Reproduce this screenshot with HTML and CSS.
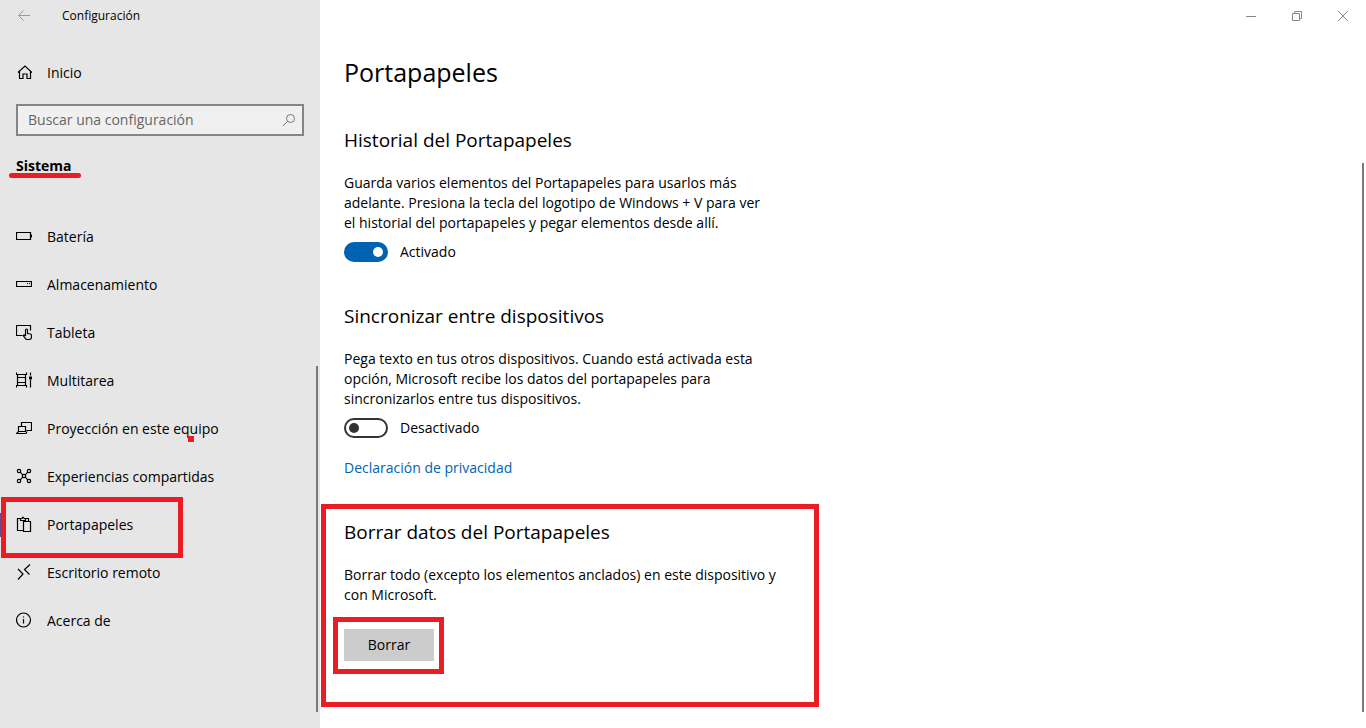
FILE: index.html
```html
<!DOCTYPE html>
<html lang="es">
<head>
  <meta charset="UTF-8" />
  <meta name="viewport" content="width=device-width, initial-scale=1.0"/>
  <title>Configuración</title>
  <link rel="stylesheet" href="styles.css">
</head>
<body>

<aside class="sidebar">
  <header class="app-bar">
    <button class="back-btn" aria-label="Atrás">
      <svg width="16" height="16" viewBox="0 0 16 16"><path d="M14 7.500H2.500M7.500 2.500l-5 5 5 5"/></svg>
    </button>
    <span class="app-name">Configuración</span>
  </header>

  <a class="nav-item" href="#inicio">
    <svg class="icon" viewBox="0 0 16 16"><path d="M2 8.500 9 2l7 6.500M3.500 7.500v7H7v-4.500h4v4.500h3.500v-7"/></svg>
    <span>Inicio</span>
  </a>

  <form class="search">
    <input type="text" placeholder="Buscar una configuración" aria-label="Buscar una configuración">
    <button type="button" aria-label="Buscar">
      <svg width="14" height="14" viewBox="0 0 14 14"><circle cx="8.500" cy="5.500" r="4"/><path d="M5.500 8.500 1 13"/></svg>
    </button>
  </form>

  <h2 class="category"><span>Sistema</span></h2>

  <nav>
    <a class="nav-item" href="#bateria">
      <svg class="icon" viewBox="0 0 16 16"><path d="M.5 4.500h14v7H.5zM15.500 6.500v3"/></svg>
      <span>Batería</span>
    </a>
    <a class="nav-item" href="#almacenamiento">
      <svg class="icon" viewBox="0 0 16 16"><path d="M.5 5.500h15v5H.5zM11 7.500h1M13 7.500h1"/></svg>
      <span>Almacenamiento</span>
    </a>
    <a class="nav-item" href="#tableta">
      <svg class="icon" viewBox="0 0 16 16"><path d="M6.500 11.500h-6v-10h14v5M9.500 12V6q0-1 1-1t1 1v3.500l3 .5q1 .3 1 1.500v1.500q0 2.500-2.500 2.500h-1.500q-1.500 0-2.200-1.200L7.500 12q-.3-1.200.8-1l1.200 1"/></svg>
      <span>Tableta</span>
    </a>
    <a class="nav-item" href="#multitarea">
      <svg class="icon" viewBox="0 0 16 16"><path d="M.5.500v2h10v-2M.5 15.500v-2h10v2M1.500 5.500h8v5h-8zM1.500 2.500v11M9.500 2.500v11M14.500.5v3M14.500 8v7.500"/><path class="fill" d="M13 4.500h3v3h-3z"/></svg>
      <span>Multitarea</span>
    </a>
    <a class="nav-item" href="#proyeccion">
      <svg class="icon" viewBox="0 0 16 16"><path d="M5.500 6.500v-4h10v8h-5M2.500 6.500h7v5h-7zM2.500 11.500l-2 2h9.500l1-2"/></svg>
      <span>Proyección en este <span class="marker">equ</span>ipo</span>
    </a>
    <a class="nav-item" href="#experiencias">
      <svg class="icon" viewBox="0 0 16 16"><circle cx="3" cy="3" r="1.700"/><circle cx="13" cy="3" r="1.700"/><circle cx="3" cy="13" r="1.700"/><circle cx="13" cy="13" r="1.700"/><circle cx="8" cy="8" r="1.700"/><path d="M4.200 4.200l2.600 2.600M11.800 4.200 9.200 6.800M4.200 11.800l2.600-2.600M11.800 11.800 9.200 9.200"/></svg>
      <span>Experiencias compartidas</span>
    </a>
    <a class="nav-item active" href="#portapapeles">
      <svg class="icon" viewBox="0 0 16 16"><path d="M7 14.500H1.500v-12h3M9.500 2.500h3v3M4.500 4.500v-2H6Q7-.5 8 2.500h1.500v2zM7.500 5.500h7v10h-7z"/></svg>
      <span>Portapapeles</span>
    </a>
    <a class="nav-item" href="#remoto">
      <svg class="icon" viewBox="0 0 16 16"><path d="M2 5l5 5-5 5.500M14 .5 8.500 5.500l5 5"/></svg>
      <span>Escritorio remoto</span>
    </a>
    <a class="nav-item" href="#acerca">
      <svg class="icon" viewBox="0 0 16 16"><circle cx="7.500" cy="8" r="7"/><path d="M7.500 7v4.500M7.500 4.500v1"/></svg>
      <span>Acerca de</span>
    </a>
  </nav>
</aside>

<div class="content">
  <div class="window-controls">
    <button aria-label="Minimizar"><svg width="12" height="12" viewBox="0 0 12 12"><path d="M1 6.500h10"/></svg></button>
    <button aria-label="Restaurar"><svg width="12" height="12" viewBox="0 0 12 12"><path d="M1.500 3.500h7v7h-7zM3.500 3.500v-2h7v7h-2"/></svg></button>
    <button aria-label="Cerrar"><svg width="12" height="12" viewBox="0 0 12 12"><path d="M1 1l10 10M11 1 1 11"/></svg></button>
  </div>

  <main>
    <h1>Portapapeles</h1>

    <section>
      <h2>Historial del Portapapeles</h2>
      <p>Guarda varios elementos del Portapapeles para usarlos más adelante. Presiona la tecla del logotipo de Windows + V para ver<br>el historial del portapapeles y pegar elementos desde allí.</p>
      <label class="toggle"><input type="checkbox" checked> Activado</label>
    </section>

    <section>
      <h2>Sincronizar entre dispositivos</h2>
      <p>Pega texto en tus otros dispositivos. Cuando está activada esta opción, Microsoft recibe los datos del portapapeles para sincronizarlos entre tus dispositivos.</p>
      <label class="toggle"><input type="checkbox"> Desactivado</label>
      <a class="link" href="#privacidad">Declaración de privacidad</a>
    </section>

    <section class="clear-data">
      <h2>Borrar datos del Portapapeles</h2>
      <p>Borrar todo (excepto los elementos anclados) en este dispositivo y con Microsoft.</p>
      <button class="clear-btn">Borrar</button>
    </section>
  </main>
</div>

</body>
</html>
```
FILE: styles.css
```css
* { box-sizing: border-box; }
body {
  margin: 0;
  min-height: 100vh;
  display: flex;
  font-family: "Segoe UI", "Open Sans", sans-serif;
  font-size: 14px;
  line-height: 20px;
  color: #000;
  background: #fff;
}
h1, h2, p { margin: 0; }
button, input { font: inherit; color: inherit; }
svg { fill: none; stroke: currentColor; display: block; }
svg .fill { fill: currentColor; stroke: none; }

/* Sidebar */
.sidebar {
  position: relative;
  flex: 0 0 320px;
  background: #e6e6e6;
}
.app-bar {
  display: flex;
  align-items: center;
  height: 32px;
  margin-bottom: 17px;
  font-size: 12px;
}
.back-btn {
  width: 48px;
  height: 32px;
  padding: 0 0 0 16px;
  border: none;
  background: none;
  color: #999;
}
.app-name { margin-left: 14px; }
.nav-item {
  position: relative;
  display: flex;
  align-items: center;
  gap: 15px;
  height: 48px;
  padding-left: 16px;
  color: #000;
  text-decoration: none;
}
.icon {
  width: 16px;
  height: 16px;
  margin-bottom: 2px;
  stroke-width: 1.2;
}
.search {
  display: flex;
  align-items: center;
  height: 32px;
  margin: 7px 16px 20px;
  border: 2px solid #858585;
  background: #f0f0f0;
}
.search input {
  flex: 1;
  min-width: 0;
  padding: 0 10px;
  border: none;
  outline: none;
  background: none;
}
.search input::placeholder { color: #666; opacity: 1; }
.search button {
  padding: 0 6px;
  border: none;
  background: none;
  color: #777;
}
.category {
  padding-left: 16px;
  margin-bottom: 37px;
  font-size: 14px;
  font-weight: 700;
  line-height: 20px;
}
.category span { position: relative; }
.nav-item.active::before {
  content: "";
  position: absolute;
  left: 0;
  top: 12px;
  width: 4px;
  height: 24px;
  background: #68478d;
}

/* Scroll thumbs */
.sidebar::after, .content::after {
  content: "";
  position: absolute;
  right: 2px;
  bottom: 16px;
  width: 2px;
  background: #7a7a7a;
}
.sidebar::after { top: 366px; }
.content::after { top: 163px; }

/* Content */
.content {
  position: relative;
  flex: 1;
  min-width: 0;
}
.window-controls {
  display: flex;
  justify-content: flex-end;
}
.window-controls button {
  display: grid;
  place-items: center;
  width: 46px;
  height: 32px;
  padding: 0;
  border: none;
  background: none;
  color: #888;
}
main { padding: 22px 24px; }
h1 {
  margin-bottom: 36px;
  font-size: 25px;
  font-weight: 400;
  line-height: 36px;
}
section {
  max-width: 440px;
  margin-bottom: 40px;
}
section h2 {
  margin-bottom: 19px;
  font-size: 19px;
  font-weight: 400;
  line-height: 28px;
}
.toggle {
  display: flex;
  align-items: center;
  gap: 12px;
  margin-top: 9px;
}
.toggle input {
  appearance: none;
  display: flex;
  align-items: center;
  width: 44px;
  height: 20px;
  margin: 0;
  padding: 0 3px;
  border: 2px solid #333;
  border-radius: 10px;
}
.toggle input::before {
  content: "";
  width: 10px;
  height: 10px;
  border-radius: 50%;
  background: #333;
}
.toggle input:checked {
  justify-content: flex-end;
  border-color: #0063b1;
  background: #0063b1;
}
.toggle input:checked::before { background: #fff; }
.link {
  display: inline-block;
  margin-top: 20px;
  color: #0063b1;
  text-decoration: none;
}
.clear-btn {
  position: relative;
  width: 90px;
  height: 32px;
  margin-top: 24px;
  padding: 0;
  border: none;
  background: #ccc;
}

/* Red marks */
.clear-data { position: relative; }
.clear-data::after, .clear-btn::after, .nav-item.active::after {
  content: "";
  position: absolute;
  border: 5px solid #ec1c24;
  pointer-events: none;
}
.clear-data::after { inset: -14px -35px -46px -23px; }
.clear-btn::after { inset: -12px -10px -13px -11px; }
.nav-item.active::after { inset: -4px 137px -9px 1px; }
.category span::after {
  content: "";
  position: absolute;
  left: -7px;
  right: -9px;
  bottom: -3px;
  height: 5px;
  border-radius: 3px;
  background: #ec1c24;
}
.marker { position: relative; }
.marker::after {
  content: "";
  position: absolute;
  right: 4px;
  bottom: -4px;
  width: 6px;
  height: 6px;
  background: #ec1c24;
}
```
